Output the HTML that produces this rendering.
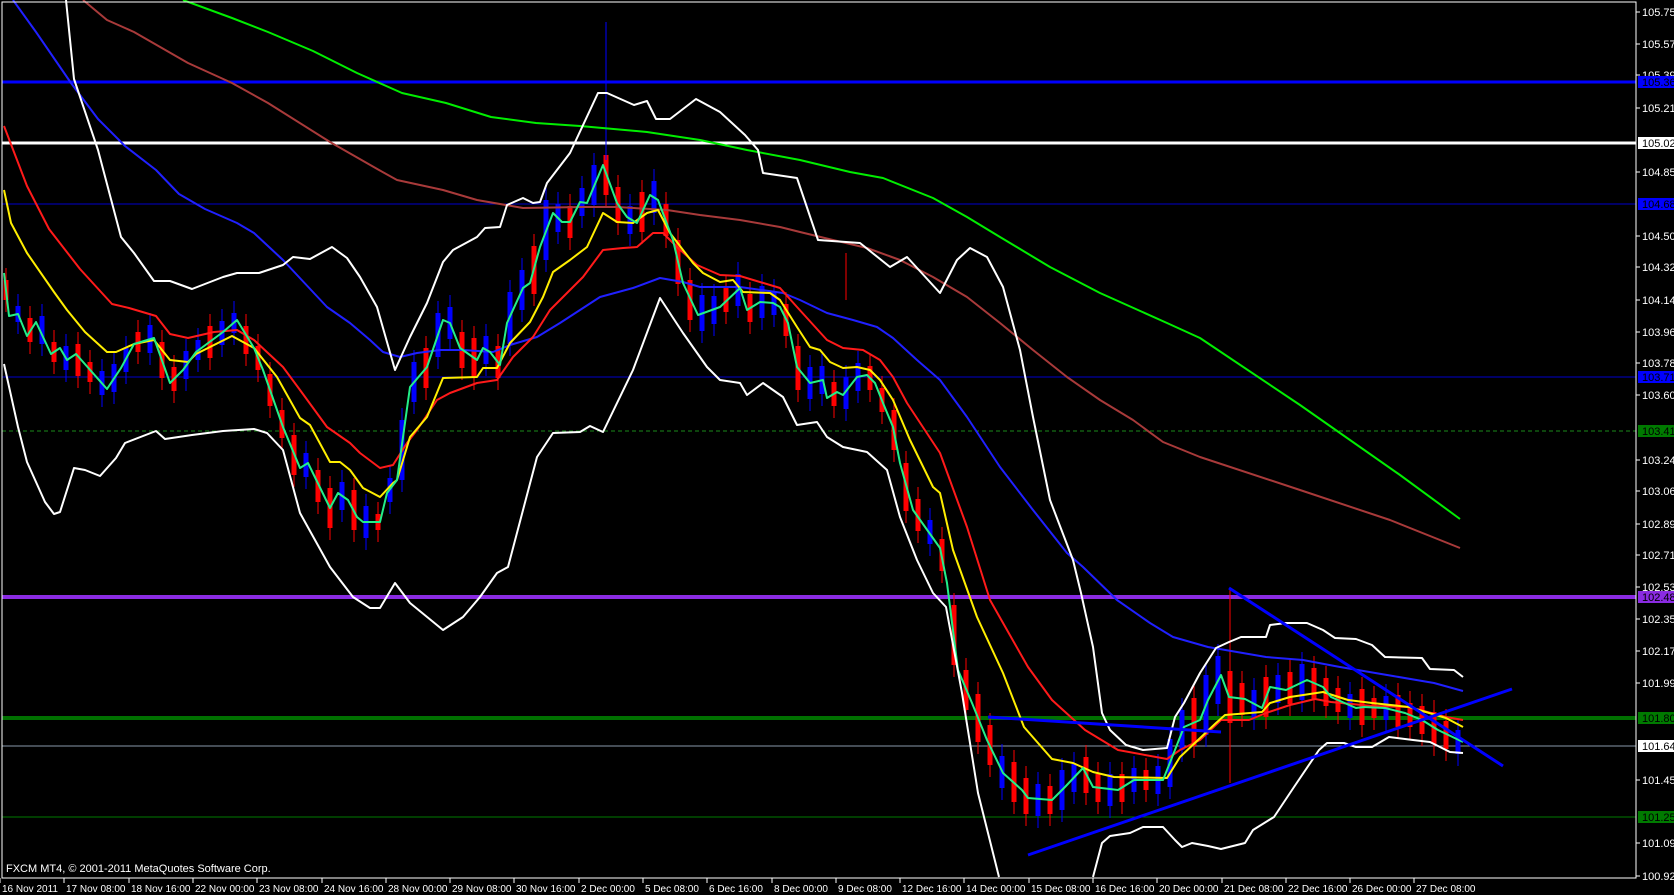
<!DOCTYPE html>
<html><head><meta charset="utf-8"><style>
html,body{margin:0;padding:0;background:#000;width:1674px;height:895px;overflow:hidden}
svg{display:block}
text{font-family:"Liberation Sans",sans-serif;font-size:11px;fill:#fff}
.d{font-size:10px}
.b{fill:#000}
</style></head><body>
<svg width="1674" height="895" viewBox="0 0 1674 895" xmlns="http://www.w3.org/2000/svg">
<rect width="1674" height="895" fill="#000"/>
<line x1="2" y1="82" x2="1636" y2="82" stroke="#0000ff" stroke-width="3"/>
<line x1="2" y1="143" x2="1636" y2="143" stroke="#fff" stroke-width="3"/>
<line x1="2" y1="204" x2="1636" y2="204" stroke="#0000cc" stroke-width="1"/>
<line x1="2" y1="377" x2="1636" y2="377" stroke="#0000cc" stroke-width="1"/>
<line x1="2" y1="431" x2="1636" y2="431" stroke="#1a8a1a" stroke-width="1" stroke-dasharray="4,3"/>
<line x1="2" y1="597" x2="1636" y2="597" stroke="#8a2be2" stroke-width="4"/>
<line x1="2" y1="718" x2="1636" y2="718" stroke="#007000" stroke-width="4"/>
<line x1="2" y1="746" x2="1636" y2="746" stroke="#8899aa" stroke-width="1"/>
<line x1="2" y1="817" x2="1636" y2="817" stroke="#007a00" stroke-width="1"/>
<g fill="none">
<path stroke="#ff0000" stroke-width="1" d="M6 268V312M30 306V354M54 330V374M78 332V388M90 350V394M138 320V364M162 330V390M174 355V403M210 314V370M246 314V366M258 334V382M270 362V418M282 398V450M294 423V487M318 458V514M330 476V540M354 478V542M378 502V542M426 336V400M462 320V380M474 326V390M498 334V390M534 234V306M570 194V250M606 143V207M618 175V235M642 180V244M666 192V248M678 228V296M690 268V332M726 276V324M750 282V334M786 292V348M798 334V402M834 370V418M846 253V300M870 354V402M882 376V424M894 398V462M906 451V523M918 487V543M942 527V583M954 593V677M966 658V722M978 682V754M990 713V777M1014 750V814M1026 766V826M1050 774V826M1086 745V805M1098 762V814M1122 762V814M1146 758V802M1194 686V758M1230 588V783M1242 671V727M1266 665V729M1290 660V716M1314 656V712M1326 666V718M1338 676V724M1362 677V737M1374 686V730M1398 683V739M1410 691V739M1422 694V746M1434 700V756M1446 709V761"/>
<path stroke="#ff0000" stroke-width="5" d="M6 280V300M30 318V342M54 342V362M78 344V376M90 362V382M138 332V352M162 342V378M174 367V391M210 326V358M246 326V354M258 346V370M270 374V406M282 410V438M294 435V475M318 470V502M330 488V528M354 490V530M378 514V530M426 348V388M462 332V368M474 338V378M498 346V378M534 246V294M570 206V238M606 155V195M618 187V223M642 192V232M666 204V236M678 240V284M690 280V320M726 288V312M750 294V322M786 304V336M798 346V390M834 382V406M870 366V390M882 388V412M894 410V450M906 463V511M918 499V531M942 539V571M954 605V665M966 670V710M978 694V742M990 725V765M1014 762V802M1026 778V814M1050 786V814M1086 757V793M1098 774V802M1122 774V802M1146 770V790M1194 698V746M1230 671V723M1242 683V715M1266 677V717M1290 672V704M1314 668V700M1326 678V706M1338 688V712M1362 689V725M1374 698V718M1398 695V727M1410 703V727M1422 706V734M1434 712V744M1446 721V749"/>
<path stroke="#0000ff" stroke-width="1" d="M18 294V334M42 304V356M66 334V382M102 359V407M114 352V404M126 336V384M150 313V365M186 339V391M198 328V372M222 309V357M234 301V345M306 441V489M342 470V522M366 494V550M390 466V514M402 408V492M414 350V414M438 301V369M450 295V351M486 324V376M510 280V356M522 258V322M546 188V272M558 192V244M582 176V228M594 153V217M606 22V160M630 194V246M654 169V225M702 283V343M714 284V336M738 262V318M762 274V330M774 279V327M810 355V411M822 354V406M846 365V421M858 351V403M930 508V556M1002 744V800M1038 772V828M1062 758V822M1074 752V804M1110 762V818M1134 756V804M1158 754V806M1170 727V799M1182 698V762M1206 663V747M1218 644V716M1254 678V730M1278 663V715M1302 652V712M1350 682V730M1386 684V732M1458 718V766"/>
<path stroke="#0000ff" stroke-width="5" d="M18 306V322M42 316V344M66 346V370M102 371V395M114 364V392M126 348V372M150 325V353M186 351V379M198 340V360M222 321V345M234 313V333M306 453V477M342 482V510M366 506V538M390 478V502M402 420V480M414 362V402M438 313V357M450 307V339M486 336V364M510 292V344M522 270V310M546 200V260M558 204V232M582 188V216M594 165V205M630 206V234M654 181V213M702 295V331M714 296V324M738 274V306M762 286V318M774 291V315M810 367V399M822 366V394M846 377V409M858 363V391M930 520V544M1002 756V788M1038 784V816M1062 770V810M1074 764V792M1110 774V806M1134 768V792M1158 766V794M1170 739V787M1182 710V750M1206 675V735M1218 656V704M1254 690V718M1278 675V703M1302 664V700M1350 694V718M1386 696V720M1458 730V754"/>
</g>
<g fill="none" stroke-linejoin="round">
<polyline stroke="#00ee00" stroke-width="2" points="183,0 232,18 268,32 313,51 357,73 402,93 446,103 491,117 536,123 580,126 647,132 700,140 747,150 800,160 850,172 883,178 933,198 967,217 1000,237 1050,267 1100,293 1167,323 1200,338 1300,405 1400,475 1460,519"/>
<polyline stroke="#a83a3a" stroke-width="2" points="83,0 107,20 134,32 188,63 232,83 268,103 330,142 379,170 397,180 443,190 477,200 523,208 583,207 617,207 667,210 700,215 740,220 780,227 800,232 833,240 867,248 900,260 933,277 967,297 1000,323 1033,350 1067,377 1100,400 1133,420 1163,442 1200,457 1300,490 1390,520 1460,548"/>
<polyline stroke="#2020ff" stroke-width="2" points="13,0 36,32 71,83 98,119 125,146 156,170 179,194 205,209 237,223 254,233 283,260 327,307 350,323 370,340 383,352 400,357 417,353 440,350 463,350 493,352 510,345 537,337 560,323 600,297 633,288 660,278 683,282 700,287 740,287 783,293 800,300 827,313 853,320 877,327 893,338 917,360 940,380 967,417 1000,467 1033,510 1067,553 1083,567 1117,600 1150,623 1173,637 1208,647 1266,657 1303,660 1340,667 1393,676 1434,683 1463,691"/>
<polyline stroke="#ff1a1a" stroke-width="2" points="4,126 27,186 49,229 80,269 112,304 129,308 156,316 170,334 188,338 214,332 237,330 254,340 283,367 300,390 327,427 350,443 360,453 380,468 393,465 407,443 417,430 437,400 450,393 477,383 497,380 513,357 533,337 550,310 567,293 583,277 603,250 623,248 637,247 653,233 663,233 677,247 697,265 720,275 740,276 780,288 797,307 827,340 843,348 863,350 880,360 893,377 907,403 940,453 967,527 990,600 1028,667 1052,700 1085,730 1118,750 1167,759 1180,750 1200,740 1221,720 1249,720 1266,713 1290,705 1315,699 1331,702 1372,706 1409,707 1446,717 1463,720"/>
<polyline stroke="#ffee00" stroke-width="2" points="4,190 11,223 27,253 54,292 67,310 85,332 107,352 116,352 134,344 154,340 170,360 188,362 196,354 232,336 254,348 277,377 300,418 310,425 330,462 340,462 350,470 363,488 380,497 393,483 397,480 410,437 427,417 443,378 477,377 483,368 497,368 510,343 530,322 543,297 553,272 570,260 587,247 603,213 617,222 633,223 647,213 658,210 670,233 693,263 703,273 720,282 733,280 743,292 770,293 780,300 797,327 810,347 820,350 830,362 843,368 857,367 870,370 880,380 893,400 910,440 933,487 940,493 953,550 977,617 1003,673 1024,727 1052,759 1073,763 1093,772 1114,777 1167,778 1180,757 1216,723 1225,715 1262,712 1270,703 1290,697 1323,692 1348,700 1372,703 1409,707 1446,718 1463,727"/>
<polyline stroke="#22ee88" stroke-width="2" points="4,273 9,316 18,314 27,336 36,322 51,354 60,348 67,360 76,354 107,389 121,368 134,344 154,338 170,383 183,370 196,352 223,332 237,320 254,348 263,370 270,390 283,427 300,468 308,463 330,508 338,493 348,500 357,517 363,522 380,522 387,493 397,480 410,387 427,367 443,320 450,323 460,348 477,360 483,348 490,352 500,365 507,323 523,288 530,283 540,247 553,213 562,222 570,222 580,202 587,203 603,165 617,203 627,217 637,223 650,195 658,200 673,240 683,283 698,315 720,307 740,288 747,310 760,302 773,303 780,307 788,323 797,367 810,383 823,380 827,398 837,392 843,395 857,377 867,375 875,383 883,403 893,427 900,463 913,510 940,548 947,583 958,670 972,703 987,740 1003,773 1022,790 1028,798 1052,800 1065,787 1083,768 1093,787 1118,790 1134,780 1163,780 1171,760 1184,727 1200,720 1208,700 1221,675 1229,697 1245,699 1262,708 1270,687 1286,690 1307,680 1323,687 1331,697 1356,708 1364,707 1385,708 1405,713 1422,720 1438,730 1463,742"/>
<polyline stroke="#ffffff" stroke-width="2" points="66,0 74,79 98,150 121,237 134,253 154,281 170,281 192,289 223,277 237,273 259,273 283,265 293,257 310,259 332,247 347,258 360,277 377,307 395,370 410,337 427,303 443,262 453,250 477,237 485,228 500,227 507,205 523,198 533,203 540,202 547,183 570,153 598,93 607,93 634,105 647,101 656,119 670,119 696,99 720,112 745,135 758,150 763,173 797,178 818,240 860,243 890,267 907,257 940,293 957,260 970,248 987,257 1003,287 1020,350 1033,417 1050,500 1073,560 1081,593 1093,647 1102,713 1110,730 1126,745 1143,750 1167,748 1175,717 1184,703 1200,673 1216,648 1229,642 1241,637 1266,637 1270,625 1286,623 1307,623 1323,630 1335,638 1356,639 1372,645 1385,657 1422,658 1430,669 1454,670 1463,677"/>
<polyline stroke="#ffffff" stroke-width="2" points="4,364 18,427 27,462 45,502 54,514 60,512 74,468 85,470 100,476 116,458 125,443 156,431 165,439 192,435 223,431 254,429 267,433 283,450 300,513 330,567 353,597 370,608 380,608 395,583 410,603 443,630 463,617 480,597 497,573 508,567 537,457 553,433 580,432 590,426 603,432 633,370 660,298 683,333 707,367 720,380 740,383 747,395 763,383 783,397 797,425 817,422 827,437 843,447 867,452 887,470 900,517 917,560 933,593 946,607 962,693 978,793 999,877"/>
<polyline stroke="#ffffff" stroke-width="2" points="1093,877 1102,843 1110,836 1130,833 1143,827 1163,827 1175,840 1182,847 1192,843 1208,846 1221,849 1245,843 1253,830 1274,817 1294,787 1319,750 1327,743 1344,743 1356,747 1372,747 1389,737 1413,740 1430,742 1450,752 1463,753"/>
<line x1="988" y1="717" x2="1221" y2="732" stroke="#0000ff" stroke-width="3"/>
<line x1="1028" y1="855" x2="1512" y2="689" stroke="#0000ff" stroke-width="3"/>
<line x1="1229" y1="588" x2="1503" y2="766" stroke="#0000ff" stroke-width="3"/>
</g>
<rect x="2" y="2" width="1634" height="876" fill="none" stroke="#fff" stroke-width="1"/>
<text x="6" y="872">FXCM MT4, © 2001-2011 MetaQuotes Software Corp.</text>
<g stroke="#fff">
<path d="M1636 12h4M1636 44h4M1636 75h4M1636 108h4M1636 172h4M1636 236h4M1636 267h4M1636 300h4M1636 332h4M1636 363h4M1636 395h4M1636 460h4M1636 491h4M1636 524h4M1636 555h4M1636 587h4M1636 619h4M1636 651h4M1636 683h4M1636 780h4M1636 843h4M1636 876h4"/>
<path d="M0 878v5M64 878v5M129 878v5M193 878v5M257 878v5M322 878v5M386 878v5M450 878v5M514 878v5M579 878v5M643 878v5M707 878v5M772 878v5M836 878v5M900 878v5M964 878v5M1029 878v5M1093 878v5M1157 878v5M1222 878v5M1286 878v5M1350 878v5M1414 878v5"/>
</g>
<text x="1642" y="16">105.750</text><text x="1642" y="48">105.575</text><text x="1642" y="79">105.395</text><text x="1642" y="112">105.215</text><text x="1642" y="176">104.855</text><text x="1642" y="240">104.500</text><text x="1642" y="271">104.320</text><text x="1642" y="304">104.140</text><text x="1642" y="336">103.960</text><text x="1642" y="367">103.785</text><text x="1642" y="399">103.605</text><text x="1642" y="464">103.245</text><text x="1642" y="495">103.065</text><text x="1642" y="528">102.890</text><text x="1642" y="559">102.710</text><text x="1642" y="591">102.530</text><text x="1642" y="623">102.350</text><text x="1642" y="655">102.170</text><text x="1642" y="687">101.990</text><text x="1642" y="784">101.455</text><text x="1642" y="847">101.095</text><text x="1642" y="880">100.920</text>
<rect x="1638" y="76" width="36" height="12" fill="#0000ff"/><text class="b" x="1642" y="86">105.360</text>
<rect x="1638" y="137" width="36" height="12" fill="#fff"/><text class="b" x="1642" y="147">105.020</text>
<rect x="1638" y="198" width="36" height="12" fill="#0000ff"/><text class="b" x="1642" y="208">104.680</text>
<rect x="1638" y="371" width="36" height="12" fill="#0000ff"/><text class="b" x="1642" y="381">103.710</text>
<rect x="1638" y="425" width="36" height="12" fill="#007a00"/><text class="b" x="1642" y="435">103.410</text>
<rect x="1638" y="591" width="36" height="12" fill="#8a2be2"/><text class="b" x="1642" y="601">102.480</text>
<rect x="1638" y="712" width="36" height="12" fill="#007a00"/><text class="b" x="1642" y="722">101.800</text>
<rect x="1638" y="740" width="36" height="12" fill="#fff"/><text class="b" x="1642" y="750">101.646</text>
<rect x="1638" y="811" width="36" height="12" fill="#007a00"/><text class="b" x="1642" y="821">101.250</text>
<text class="d" x="2" y="892">16 Nov 2011</text><text class="d" x="66" y="892">17 Nov 08:00</text><text class="d" x="131" y="892">18 Nov 16:00</text><text class="d" x="195" y="892">22 Nov 00:00</text><text class="d" x="259" y="892">23 Nov 08:00</text><text class="d" x="324" y="892">24 Nov 16:00</text><text class="d" x="388" y="892">28 Nov 00:00</text><text class="d" x="452" y="892">29 Nov 08:00</text><text class="d" x="516" y="892">30 Nov 16:00</text><text class="d" x="581" y="892">2 Dec 00:00</text><text class="d" x="645" y="892">5 Dec 08:00</text><text class="d" x="709" y="892">6 Dec 16:00</text><text class="d" x="774" y="892">8 Dec 00:00</text><text class="d" x="838" y="892">9 Dec 08:00</text><text class="d" x="902" y="892">12 Dec 16:00</text><text class="d" x="966" y="892">14 Dec 00:00</text><text class="d" x="1031" y="892">15 Dec 08:00</text><text class="d" x="1095" y="892">16 Dec 16:00</text><text class="d" x="1159" y="892">20 Dec 00:00</text><text class="d" x="1224" y="892">21 Dec 08:00</text><text class="d" x="1288" y="892">22 Dec 16:00</text><text class="d" x="1352" y="892">26 Dec 00:00</text><text class="d" x="1416" y="892">27 Dec 08:00</text>
</svg>
</body></html>
